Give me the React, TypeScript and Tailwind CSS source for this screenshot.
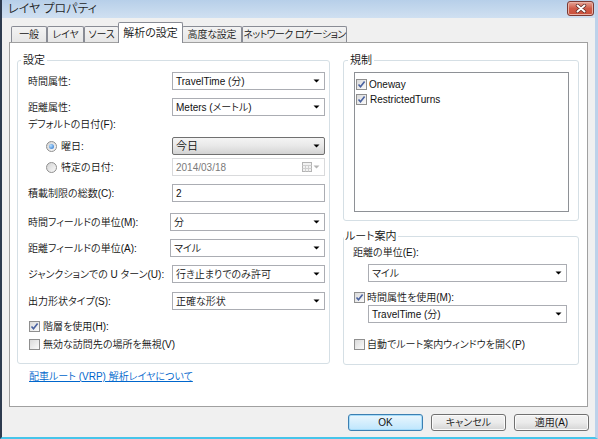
import React from "react";

const Caret = ({ color = "#000" }: { color?: string }) => (
  <svg width="7" height="4" viewBox="0 0 7 4" className="shrink-0">
    <path d="M0.5 0.5h6L3.5 3.5z" fill={color} />
  </svg>
);

function Combo({ value, className = "" }: { value: string; className?: string }) {
  return (
    <div className={`h-[18px] bg-white border border-[#abadb3] flex items-center justify-between pl-[3px] pr-[4px] ${className}`}>
      <span>{value}</span>
      <Caret />
    </div>
  );
}

function Check({ on }: { on?: boolean }) {
  return (
    <span className="w-[11px] h-[11px] shrink-0 border border-[#8f8f8f] bg-linear-to-br from-[#dadada] to-[#fbfbfb] flex items-center justify-center">
      {on && (
        <svg width="9" height="9" viewBox="0 0 9 9">
          <path d="M1.5 4.5L3.5 6.8L7.6 1.6" stroke="#4a62a0" strokeWidth="1.6" fill="none" />
        </svg>
      )}
    </span>
  );
}

function Radio({ on }: { on?: boolean }) {
  return (
    <span className="w-[11px] h-[11px] shrink-0 rounded-full border border-[#8f8f8f] bg-linear-to-br from-[#d4d4d4] to-[#f9f9f9] flex items-center justify-center">
      {on && <span className="w-[5px] h-[5px] rounded-full bg-[radial-gradient(circle_at_35%_35%,#b7e0ff,#1f6bc9)]" />}
    </span>
  );
}

function Group({
  label,
  className = "",
  legendCls = "",
  children,
}: {
  label: string;
  className?: string;
  legendCls?: string;
  children: React.ReactNode;
}) {
  return (
    <fieldset className={`border border-[#d5dfe5] rounded-[3px] min-w-0 ${className}`}>
      <legend className={`px-[2px] leading-[13px] text-[11px] ${legendCls}`}>{label}</legend>
      {children}
    </fieldset>
  );
}

function Row({ label, className = "", children }: { label: React.ReactNode; className?: string; children: React.ReactNode }) {
  return (
    <div className={`flex items-center ${className}`}>
      <div className="w-[144px] shrink-0 flex items-center whitespace-nowrap">{label}</div>
      <div className="w-[153px]">{children}</div>
    </div>
  );
}

function Tab({ label, width, active, tight }: { label: string; width: string; active?: boolean; tight?: boolean }) {
  if (active) {
    return (
      <div className={`${width} h-[21px] -mb-px -mx-px relative z-10 bg-white border border-b-0 border-[#898c95] rounded-t-[2px] flex items-center justify-center whitespace-nowrap text-[11px]`}>
        {label}
      </div>
    );
  }
  return (
    <div
      className={`${width} h-[16px] bg-linear-to-b from-[#f3f3f3] to-[#e6e6e6] border border-b-0 border-[#898c95] rounded-t-[2px] flex items-center justify-center whitespace-nowrap ${
        tight ? "tracking-[-0.6px]" : "tracking-[-0.2px]"
      }`}
    >
      {label}
    </div>
  );
}

function Btn({ label, primary }: { label: string; primary?: boolean }) {
  return (
    <button
      className={`w-[75px] h-[17px] rounded-[3px] border flex items-center justify-center leading-none ${
        primary
          ? "border-[#3c7fb1] bg-linear-to-b from-[#eaf6fd] to-[#bee6fd] shadow-[inset_0_0_0_1px_#a6dcfa]"
          : "border-[#707070] bg-linear-to-b from-[#f2f2f2] via-[#ebebeb] to-[#d4d4d4] shadow-[inset_0_0_0_1px_#fbfbfb]"
      }`}
    >
      {label}
    </button>
  );
}

export default function App() {
  return (
    <div className="w-[598px] h-[439px] flex flex-col bg-[#f0f0f0] border-l-2 border-l-[#2d3b4f] border-r-[3px] border-r-[#bdd2ea] border-b-2 border-b-[#46c5ea] font-['Liberation_Sans','Noto_Sans_CJK_JP',sans-serif] font-[350] [font-feature-settings:'palt'] text-[10px] leading-[13px] text-[#111] overflow-hidden">
      {/* title bar */}
      <div className="h-[18px] shrink-0 flex items-start justify-between bg-linear-to-b from-[#b7cfe9] to-[#d0e0f1] pl-[6px]">
        <span className="text-[12px] leading-[19px] text-[#1e1e1e] whitespace-nowrap">レイヤ プロパティ</span>
        <div className="mt-px mr-px w-[27px] h-[15px] rounded-[3px] border border-[#7b3a34] bg-linear-to-b from-[#e4a497] via-[#cf5b48] to-[#c9503c] shadow-[inset_0_0_0_1px_#eab2a6] flex items-center justify-center">
          <svg width="12" height="9" viewBox="0 0 12 9">
            <path d="M2.5 1.5L9.5 7.5M9.5 1.5L2.5 7.5" stroke="#5a2620" strokeWidth="3.4" strokeLinecap="round" />
            <path d="M2.5 1.5L9.5 7.5M9.5 1.5L2.5 7.5" stroke="#fff" strokeWidth="2" strokeLinecap="round" />
          </svg>
        </div>
      </div>

      {/* tabs */}
      <div className="h-[24px] shrink-0 flex items-end pl-[9px]">
        <Tab label="一般" width="w-[36px]" />
        <Tab label="レイヤ" width="w-[37px]" />
        <Tab label="ソース" width="w-[35px]" />
        <Tab label="解析の設定" width="w-[65px]" active />
        <Tab label="高度な設定" width="w-[60px]" />
        <Tab label="ネットワーク ロケーション" width="w-[105px]" tight />
      </div>

      {/* tab panel */}
      <div className="mx-[7px] h-[365px] shrink-0 bg-white border border-[#a0a0a0] pt-[11px] pl-[7px] pr-[8px]">
        <div className="flex gap-[13px]">
          <Group label="設定" className="w-[313px] h-[310px]" legendCls="ml-[3px]">
            <div className="pl-[10px] pr-[4px] flex flex-col">
              <Row label="時間属性:" className="mt-[5px]">
                <Combo value="TravelTime (分)" />
              </Row>
              <Row label="距離属性:" className="mt-[8px]">
                <Combo value="Meters (メートル)" />
              </Row>
              <div className="mt-px h-[14px] flex items-center">デフォルトの日付(F):</div>
              <Row
                className="mt-[6px]"
                label={
                  <span className="pl-[18px] flex items-center gap-[4px]">
                    <Radio on />
                    曜日:
                  </span>
                }
              >
                <div className="h-[18px] rounded-[2px] border border-[#707070] bg-linear-to-b from-[#f4f4f4] via-[#e8e8e8] to-[#d3d3d3] flex items-center justify-between pl-[3px] pr-[4px]">
                  <span className="text-[11px]">今日</span>
                  <Caret />
                </div>
              </Row>
              <Row
                className="mt-[3px]"
                label={
                  <span className="pl-[18px] flex items-center gap-[4px]">
                    <Radio />
                    特定の日付:
                  </span>
                }
              >
                <div className="h-[18px] bg-white border border-[#d9dadc] flex items-center justify-between pl-[3px] pr-[4px] text-[#7a7a7a]">
                  <span>2014/03/18</span>
                  <span className="flex items-center gap-px">
                    <svg width="10" height="10" viewBox="0 0 10 10">
                      <rect x="0.5" y="0.5" width="9" height="9" fill="#f2f2f2" stroke="#b4b4b4" />
                      <path d="M0.5 3.5h9M0.5 6.5h9M3.5 3.5v6M6.5 3.5v6" stroke="#cfcfcf" />
                    </svg>
                    <Caret color="#b4b4b4" />
                  </span>
                </div>
              </Row>
              <Row label="積載制限の総数(C):" className="mt-[8px]">
                <div className="h-[18px] bg-white border border-[#abadb3] flex items-center pl-[3px]">2</div>
              </Row>
              <Row label="時間フィールドの単位(M):" className="mt-[11px]">
                <Combo value="分" className="-ml-[2px] w-[155px]" />
              </Row>
              <Row label="距離フィールドの単位(A):" className="mt-[8px]">
                <Combo value="マイル" className="-ml-[2px] w-[155px]" />
              </Row>
              <Row label="ジャンクションでの U ターン(U):" className="mt-[8px]">
                <Combo value="行き止まりでのみ許可" />
              </Row>
              <Row label="出力形状タイプ(S):" className="mt-[9px]">
                <Combo value="正確な形状" />
              </Row>
              <div className="mt-[10px] h-[13px] pl-px flex items-center gap-[3px]">
                <Check on />
                階層を使用(H):
              </div>
              <div className="mt-[5px] h-[13px] pl-px flex items-center gap-[3px]">
                <Check />
                無効な訪問先の場所を無視(V)
              </div>
            </div>
          </Group>

          <div className="w-[236px] flex flex-col gap-[9px]">
            <Group label="規制" className="h-[167px]" legendCls="ml-[4px]">
              <div className="mt-[5px] ml-[10px] mr-[9px] h-[140px] bg-white border border-[#8e9196] pt-[4px] pl-px flex flex-col gap-px">
                <div className="h-[14px] flex items-center gap-[2px]">
                  <Check on />
                  Oneway
                </div>
                <div className="h-[14px] flex items-center gap-[3px]">
                  <Check on />
                  RestrictedTurns
                </div>
              </div>
            </Group>

            <Group label="ルート案内" className="h-[135px]" legendCls="px-px">
              <div className="pl-[9px] pr-[11px] flex flex-col">
                <div className="mt-[3px] h-[13px] flex items-center">距離の単位(E):</div>
                <Combo value="マイル" className="mt-[5px] ml-[15px]" />
                <div className="mt-[9px] h-[13px] pl-px flex items-center gap-[2px]">
                  <Check on />
                  時間属性を使用(M):
                </div>
                <Combo value="TravelTime (分)" className="mt-px ml-[15px]" />
                <div className="mt-[15px] h-[13px] pl-px flex items-center gap-[2px]">
                  <Check />
                  自動でルート案内ウィンドウを開く(P)
                </div>
              </div>
            </Group>
          </div>
        </div>

        <a href="#" className="block w-fit mt-[5px] ml-[12px] text-[#0066cc] underline">
          配車ルート (VRP) 解析レイヤについて
        </a>
      </div>

      {/* buttons */}
      <div className="mt-[7px] pr-[6px] flex justify-end gap-[8px]">
        <Btn label="OK" primary />
        <Btn label="キャンセル" />
        <Btn label="適用(A)" />
      </div>
    </div>
  );
}
